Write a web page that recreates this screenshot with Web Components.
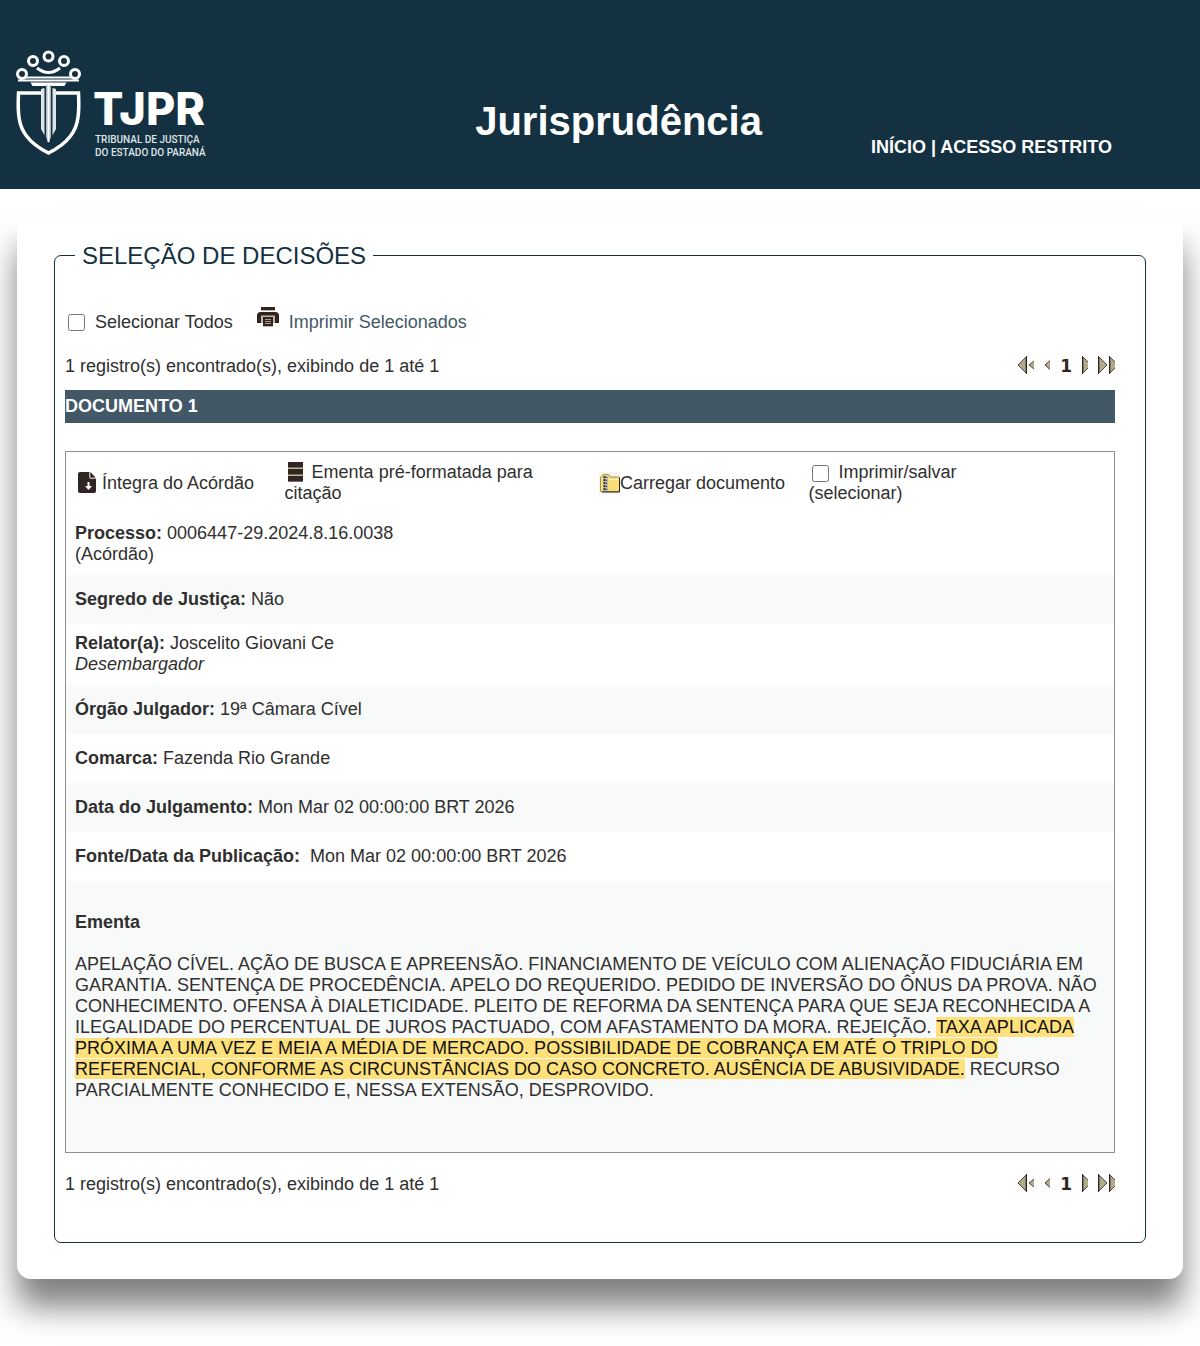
<!DOCTYPE html>
<html lang="pt-BR">
<head>
<meta charset="utf-8">
<meta name="viewport" content="width=device-width, initial-scale=1">
<title>Jurisprudência - TJPR</title>
<style>
    body {
        margin: 0;
        background: #fff;
        color: #302f2f;
        font: 18px/21px "Liberation Sans", Arial, sans-serif;
    }
</style>
</head>
<body>
<site-header heading="Jurisprudência">
    <a href="#inicio">INÍCIO</a> | <a href="#acesso">ACESSO RESTRITO</a>
</site-header>
<page-card>
    <decision-panel heading="SELEÇÃO DE DECISÕES">
        <select-bar></select-bar>
        <result-pager>1 registro(s) encontrado(s), exibindo de 1 até 1</result-pager>
        <document-title>DOCUMENTO 1</document-title>
        <decision-document>
            <document-actions></document-actions>
            <document-field label="Processo:">0006447-29.2024.8.16.0038<br>(Acórdão)</document-field>
            <document-field label="Segredo de Justiça:">Não</document-field>
            <document-field label="Relator(a):">Joscelito Giovani Ce<br><i>Desembargador</i></document-field>
            <document-field label="Órgão Julgador:">19ª Câmara Cível</document-field>
            <document-field label="Comarca:">Fazenda Rio Grande</document-field>
            <document-field label="Data do Julgamento:">Mon Mar 02 00:00:00 BRT 2026</document-field>
            <document-field label="Fonte/Data da Publicação:">&nbsp;Mon Mar 02 00:00:00 BRT 2026</document-field>
            <document-summary heading="Ementa">APELAÇÃO CÍVEL. AÇÃO DE BUSCA E APREENSÃO. FINANCIAMENTO DE VEÍCULO COM ALIENAÇÃO FIDUCIÁRIA EM GARANTIA. SENTENÇA DE PROCEDÊNCIA. APELO DO REQUERIDO. PEDIDO DE INVERSÃO DO ÔNUS DA PROVA. NÃO CONHECIMENTO. OFENSA À DIALETICIDADE. PLEITO DE REFORMA DA SENTENÇA PARA QUE SEJA RECONHECIDA A ILEGALIDADE DO PERCENTUAL DE JUROS PACTUADO, COM AFASTAMENTO DA MORA. REJEIÇÃO. <mark>TAXA APLICADA PRÓXIMA A UMA VEZ E MEIA A MÉDIA DE MERCADO. POSSIBILIDADE DE COBRANÇA EM ATÉ O TRIPLO DO REFERENCIAL, CONFORME AS CIRCUNSTÂNCIAS DO CASO CONCRETO. AUSÊNCIA DE ABUSIVIDADE.</mark> RECURSO PARCIALMENTE CONHECIDO E, NESSA EXTENSÃO, DESPROVIDO.</document-summary>
        </decision-document>
        <result-pager>1 registro(s) encontrado(s), exibindo de 1 até 1</result-pager>
    </decision-panel>
</page-card>

<script>
class BaseElement extends HTMLElement {
    constructor() {
        super();
        this.attachShadow({ mode: 'open' });
        this.shadowRoot.innerHTML = `
        <style>
          ${this.style()}
        </style>
        ${this.html()}
        `;
    }

    attr(name) {
        return this.getAttribute(name) || '';
    }

    style() { return ':host { display: block; }' }
    html() { return '<slot></slot>' }
}

class TjprLogo extends BaseElement {
    static name = 'tjpr-logo'

    style() { return `
    :host {
        display: block;
    }
    svg {
        display: block;
    }
`}

    html() { return /*html*/`
    <svg width="200" height="110" viewBox="0 0 200 110" fill="none" stroke="#fff" role="img" aria-label="TJPR">
        <g stroke-width="3">
            <circle cx="8" cy="26" r="4.5"/>
            <circle cx="19" cy="13" r="4.5"/>
            <circle cx="34.5" cy="8.5" r="4.5"/>
            <circle cx="50" cy="13" r="4.5"/>
            <circle cx="61" cy="26" r="4.5"/>
        </g>
        <path d="M23 20q11.500 9 23 0" stroke-width="3"/>
        <path d="M11 29.500h47" stroke-width="2"/>
        <path d="M4 32.500h61" stroke-width="2"/>
        <path d="M16.500 34.500h36l-2 3.500h-32z" fill="#fff" stroke="none"/>
        <path d="M27 45H4.500c-1 20 0 33 8 43 6 8 14 13 22 17 8-4 16-9 22-17 8-10 9-23 8-43H42" stroke-width="3.5"/>
        <path d="M27 41l3.500-1v47.500L27 81zM42 41l-3.500-1v47.500L42 81z" fill="#dfe4e6" stroke="none"/>
        <path d="M32 37h5v52l-2.500 6-2.500-6z" fill="#aeb8be" stroke="none"/>
        <path d="M34.500 37v57" stroke-width="2"/>
        <g fill="#fff" stroke="none">
            <text x="79" y="77" font-family="Inter, sans-serif" font-size="45" font-weight="800">TJPR</text>
            <g font-family="Roboto, sans-serif" font-size="10" font-weight="500" fill="#dfe4e6">
                <text x="81" y="95">TRIBUNAL DE JUSTIÇA</text>
                <text x="81" y="108">DO ESTADO DO PARANÁ</text>
            </g>
        </g>
    </svg>
`}
}
customElements.define(TjprLogo.name, TjprLogo)

class SiteHeader extends BaseElement {
    static name = 'site-header'

    style() { return `
    :host {
        display: block;
        background: #143142;
        color: #fff;
    }
    header {
        display: grid;
        grid-template-columns: 42% auto 1fr;
        align-items: end;
        padding: 48px 88px 31px 14px;
    }
    h1 {
        margin: 0 0 13px;
        font-size: 40px;
        line-height: 48px;
    }
    nav {
        justify-self: end;
        font-weight: bold;
    }
    ::slotted(a) {
        color: inherit;
        text-decoration: none;
    }
`}

    html() { return /*html*/`
    <header>
        <tjpr-logo></tjpr-logo>
        <h1>${this.attr('heading')}</h1>
        <nav><slot></slot></nav>
    </header>
`}
}
customElements.define(SiteHeader.name, SiteHeader)

class PageCard extends BaseElement {
    static name = 'page-card'

    style() { return `
    :host {
        display: block;
        margin: 28px 17px 67px;
        padding: 23px 37px 36px;
        border-radius: 14px;
        background: #fff;
        box-shadow: 0 28px 32px rgba(0, 0, 0, .5);
    }
`}
}
customElements.define(PageCard.name, PageCard)

class DecisionPanel extends BaseElement {
    static name = 'decision-panel'

    style() { return `
    :host {
        display: block;
    }
    fieldset {
        min-width: 0;
        margin: 0;
        padding: 0 30px 47px 10px;
        border: 1px solid #143142;
        border-radius: 7px;
    }
    legend {
        margin-left: 10px;
        padding: 2px 7px 0;
        color: #143142;
        font-size: 24px;
        line-height: 28px;
    }
`}

    html() { return /*html*/`
    <fieldset>
        <legend>${this.attr('heading')}</legend>
        <slot></slot>
    </fieldset>
`}
}
customElements.define(DecisionPanel.name, DecisionPanel)

class SelectBar extends BaseElement {
    static name = 'select-bar'

    style() { return `
    :host {
        display: flex;
        flex-wrap: wrap;
        gap: 24px;
        padding: 42px 0 23px 3px;
    }
    label, a {
        display: flex;
        gap: 10px;
    }
    input {
        width: 17px;
        height: 17px;
        margin: 2px 0 0;
    }
    a {
        color: #425866;
        text-decoration: none;
    }
    svg {
        margin-top: -5px;
    }
`}

    html() { return /*html*/`
    <label><input type="checkbox">Selecionar Todos</label>
    <a href="#imprimir">
        <svg width="22" height="20" viewBox="0 0 22 20" aria-hidden="true">
            <path d="M4 0h14v3H4z" fill="#302522"/>
            <path d="M4 3.500h14" stroke="#c2b79b"/>
            <path d="M3.500 5h15A3.500 3.500 0 0 1 22 8.500V16h-4V9H4v7H0V8.500A3.500 3.500 0 0 1 3.500 5z" fill="#302522"/>
            <path d="M4 8.500h14V16h-2v4H6v-4H4z" fill="#c2b79b"/>
            <path d="M6 10h10v9H6z" fill="#302522"/>
            <path d="M8 12.500h6M8 14.500h6M8 16.500h6" stroke="#a99f89"/>
        </svg>
        Imprimir Selecionados
    </a>
`}
}
customElements.define(SelectBar.name, SelectBar)

class ResultPager extends BaseElement {
    static name = 'result-pager'

    style() { return `
    :host {
        display: flex;
        justify-content: space-between;
    }
    nav {
        display: flex;
        align-items: start;
        gap: 10px;
        color: #302522;
    }
    button {
        padding: 0;
        border: 0;
        background: none;
    }
    svg {
        display: block;
        fill: #b5a98c;
        stroke: #4b4640;
    }
    .bar {
        fill: none;
        stroke: #302522;
    }
    strong {
        font: bold 17px/21px "DejaVu Sans", sans-serif;
    }
`}

    html() { return /*html*/`
    <span><slot></slot></span>
    <nav aria-label="Páginas">
        <button type="button" aria-label="Primeira página"><svg width="17" height="18" viewBox="0 0 17 18">
            <path d="M9 1v16L1 9z"/><path class="bar" d="M9.500 0v18"/>
            <path d="M17 5l-5 4 5 4"/>
        </svg></button>
        <button type="button" aria-label="Página anterior"><svg width="6" height="18" viewBox="0 0 6 18">
            <path d="M6 4.500L1 9l5 4.500"/>
        </svg></button>
        <strong>1</strong>
        <button type="button" aria-label="Próxima página"><svg width="6" height="18" viewBox="0 0 6 18">
            <path d="M1 1l8 8-8 8z"/><path class="bar" d="M.5 0v18"/>
        </svg></button>
        <button type="button" aria-label="Última página"><svg width="17" height="18" viewBox="0 0 17 18">
            <path d="M1 1l8 8-8 8z"/><path class="bar" d="M.5 0v18"/>
            <path d="M12 1l8 8-8 8z"/><path class="bar" d="M11.500 0v18"/>
        </svg></button>
    </nav>
`}
}
customElements.define(ResultPager.name, ResultPager)

class DocumentTitle extends BaseElement {
    static name = 'document-title'

    style() { return `
    :host {
        display: block;
        margin: 13px 0 28px;
        background: #425866;
        color: #fff;
        font-weight: bold;
        line-height: 33px;
    }
`}
}
customElements.define(DocumentTitle.name, DocumentTitle)

class DecisionDocument extends BaseElement {
    static name = 'decision-document'

    style() { return `
    :host {
        display: block;
        margin-bottom: 21px;
        border: 1px solid #8b908f;
    }
`}
}
customElements.define(DecisionDocument.name, DecisionDocument)

class DocumentActions extends BaseElement {
    static name = 'document-actions'

    style() { return `
    :host {
        display: grid;
        grid-template-columns: 20% 30% 20% 20%;
        align-items: center;
        min-height: 62px;
    }
    div {
        padding: 0 9px;
    }
    a {
        color: inherit;
        text-decoration: none;
    }
    .row {
        display: flex;
        align-items: center;
        white-space: nowrap;
    }
    .file {
        margin: 0 5px 0 2px;
    }
    .list {
        margin: 0 4px 0 3px;
        vertical-align: -4px;
    }
    input {
        width: 17px;
        height: 17px;
        margin: 0 5px 0 3px;
        vertical-align: -4px;
    }
`}

    html() { return /*html*/`
    <div><a class="row" href="#integra">
        <svg class="file" width="20" height="22" viewBox="0 0 20 22" aria-hidden="true">
            <path d="M3 0h9l7 7v12a2 2 0 0 1-2 2H3a2 2 0 0 1-2-2V2a2 2 0 0 1 2-2z" fill="#302522"/>
            <path d="M12 0l7 7h-5a2 2 0 0 1-2-2z" fill="#c2b79b"/>
            <path d="M13.500 0l5 5.500h-5z" fill="#302522"/>
            <path d="M10.500 10h2v4h2.500l-3.500 4L8 14h2.500z" fill="#fff"/>
        </svg>Íntegra do Acórdão</a></div>
    <div><a href="#ementa"><svg class="list" width="15" height="20" viewBox="0 0 15 20" aria-hidden="true">
            <path d="M0 0h15v20H0z" fill="#c2b79b"/>
            <path d="M0 0h15v5.500H0zM0 7h15v5.500H0zM0 14h15v5.500H0z" fill="#302522"/>
        </svg> Ementa pré-formatada para citação</a></div>
    <div><a class="row" href="#carregar">
        <svg width="21" height="22" viewBox="0 0 21 22" aria-hidden="true">
            <path d="M0 0h21v22H0z" fill="#f3f3f3"/>
            <path d="M1.500 19.500V5l3-2.500h5L11 5h9.500v14.500z" fill="#f8de79" stroke="#a89550"/>
            <path d="M10 7.500h9.500" stroke="#fff3b8"/>
            <path d="M20.500 6v14H3" fill="none" stroke="#222"/>
            <path d="M4 4h5v15H4z" fill="#bcb9a8"/>
            <path d="M5.500 4v15" stroke="#363636" stroke-width="2" stroke-dasharray="2 1"/>
            <path d="M7.500 5v14" stroke="#363636" stroke-dasharray="1 2"/>
        </svg>Carregar documento</a></div>
    <div><label><input type="checkbox"> Imprimir/salvar (selecionar)</label></div>
`}
}
customElements.define(DocumentActions.name, DocumentActions)

class DocumentField extends BaseElement {
    static name = 'document-field'

    style() { return `
    :host {
        display: block;
        padding: 14px 9px;
    }
    :host(:nth-child(odd)) {
        background: #f8faf9;
    }
    :host(.tall) {
        padding: 9px 9px 10px;
    }
`}

    html() { return /*html*/`
    <strong>${this.attr('label')}</strong> <slot></slot>
`}

    connectedCallback() {
        // two-line values sit closer to the row edges
        this.classList.toggle('tall', !!this.querySelector('br'));
    }
}
customElements.define(DocumentField.name, DocumentField)

class DocumentSummary extends BaseElement {
    static name = 'document-summary'

    style() { return `
    :host {
        display: block;
        padding: 31px 9px 51px;
        background: #f8faf9;
    }
    h2 {
        margin: 0 0 21px;
        font-size: 18px;
        line-height: 21px;
    }
    p {
        margin: 0;
    }
    ::slotted(mark) {
        background: #ffe17c;
        color: #111;
    }
`}

    html() { return /*html*/`
    <h2>${this.attr('heading')}</h2>
    <p><slot></slot></p>
`}
}
customElements.define(DocumentSummary.name, DocumentSummary)
</script>
</body>
</html>
